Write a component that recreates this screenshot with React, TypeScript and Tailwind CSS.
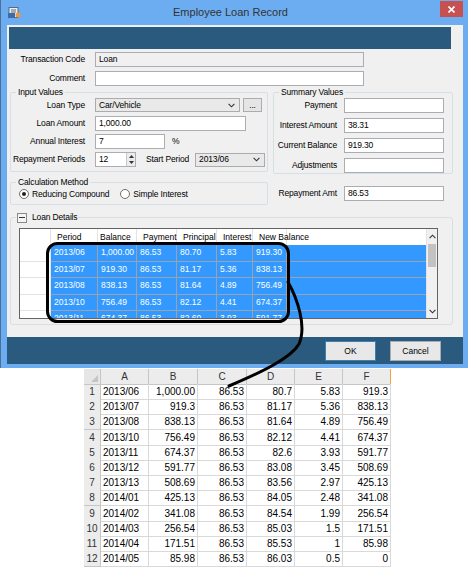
import React from "react";

// ---------- data ----------
const gridRows = [
	["2013/06", "1,000.00", "86.53", "80.70", "5.83", "919.30"],
	["2013/07", "919.30", "86.53", "81.17", "5.36", "838.13"],
	["2013/08", "838.13", "86.53", "81.64", "4.89", "756.49"],
	["2013/10", "756.49", "86.53", "82.12", "4.41", "674.37"],
	["2013/11", "674.37", "86.53", "82.60", "3.93", "591.77"],
];
const gridCols = ["Period", "Balance", "Payment", "Principal", "Interest", "New Balance"];
const gridWidths = ["w-[47px]", "w-[39px]", "w-[40px]", "w-[40px]", "w-[36px]", "w-[34px]"];

const sheetRows = [
	["2013/06", "1,000.00", "86.53", "80.7", "5.83", "919.3"],
	["2013/07", "919.3", "86.53", "81.17", "5.36", "838.13"],
	["2013/08", "838.13", "86.53", "81.64", "4.89", "756.49"],
	["2013/10", "756.49", "86.53", "82.12", "4.41", "674.37"],
	["2013/11", "674.37", "86.53", "82.6", "3.93", "591.77"],
	["2013/12", "591.77", "86.53", "83.08", "3.45", "508.69"],
	["2013/13", "508.69", "86.53", "83.56", "2.97", "425.13"],
	["2014/01", "425.13", "86.53", "84.05", "2.48", "341.08"],
	["2014/02", "341.08", "86.53", "84.54", "1.99", "256.54"],
	["2014/03", "256.54", "86.53", "85.03", "1.5", "171.51"],
	["2014/04", "171.51", "86.53", "85.53", "1", "85.98"],
	["2014/05", "85.98", "86.53", "86.03", "0.5", "0"],
];

// ---------- small controls ----------
const Chevron = () => (
	<svg width="7" height="5" viewBox="0 0 7 5" aria-hidden="true">
		<path d="M0.6 0.8 L3.5 3.8 L6.4 0.8" fill="none" stroke="#333" strokeWidth="1.1" />
	</svg>
);

const TextBox = ({ className = "", value = "", gray = false }: { className?: string; value?: string; gray?: boolean }) => (
	<div
		className={`h-[15px] border border-[#abadb3] flex items-center pl-[3px] whitespace-nowrap ${gray ? "bg-[#f0f0f0]" : "bg-white"} ${className}`}
	>
		{value}
	</div>
);

const Combo = ({ className = "", value }: { className?: string; value: string }) => (
	<div className={`h-[14px] border border-[#acacac] bg-[#e9e9e9] flex items-center pl-[3px] pr-[4px] ${className}`}>
		<span className="flex-1 whitespace-nowrap">{value}</span>
		<Chevron />
	</div>
);

const Radio = ({ checked, label }: { checked?: boolean; label: string }) => (
	<div className="flex items-center gap-[3px]">
		<div className="w-[10px] h-[10px] rounded-full border border-[#6f6f6f] bg-white flex items-center justify-center">
			{checked && <div className="w-[4px] h-[4px] rounded-full bg-[#222]" />}
		</div>
		<span className="whitespace-nowrap">{label}</span>
	</div>
);

const Legend = ({ children }: { children: React.ReactNode }) => (
	<legend className="ml-[5px] px-[2px] leading-[11px] whitespace-nowrap">{children}</legend>
);

// ---------- window ----------
const LoanDialog = () => (
	<div className="w-[468px] h-[368px] bg-[#6cadf1] border-l border-[#4d6f96]">
		{/* title bar */}
		<div className="h-[25px] flex items-start">
			<div className="ml-[7px] mt-[7px] w-[13px] h-[12px]">
				<svg width="13" height="12" viewBox="0 0 13 12" aria-hidden="true">
					<rect x="1" y="0.5" width="9" height="10" fill="#e9eef4" stroke="#5b6b7d" />
					<rect x="3" y="2.5" width="5" height="1" fill="#5b6b7d" />
					<rect x="3" y="4.5" width="5" height="1" fill="#5b6b7d" />
					<rect x="0" y="6" width="7" height="5" fill="#3f6aa8" />
					<circle cx="10" cy="8" r="2.5" fill="#e89a3c" />
				</svg>
			</div>
			<div className="flex-1 text-center text-[11px] leading-[25px] text-[#333]">Employee Loan Record</div>
			<div className="mt-[1px] mr-[5px] w-[23px] h-[16px] bg-[#c75050] flex items-center justify-center">
				<svg width="7" height="7" viewBox="0 0 7 7" aria-hidden="true">
					<path d="M0.5 0.5 L6.5 6.5 M6.5 0.5 L0.5 6.5" stroke="#fff" strokeWidth="1.6" />
				</svg>
			</div>
		</div>

		{/* client area */}
		<div className="ml-[6px] w-[456px] bg-[#f0f0f0] text-[8.5px] leading-[11px] tracking-[-0.15px] text-black">
			<div className="h-[312px] pt-[2px]">
				<div className="ml-[2px] w-[442px] h-[22px] bg-[#2a5a7e]" />

				<div className="mt-[3px] flex items-center">
					<div className="w-[78px] text-right whitespace-nowrap">Transaction Code</div>
					<TextBox className="ml-[10px] w-[269px]" value="Loan" gray />
				</div>
				<div className="mt-[4px] flex items-center">
					<div className="w-[78px] text-right">Comment</div>
					<TextBox className="ml-[10px] w-[269px]" />
				</div>

				<div className="mt-[1px] flex">
					{/* left column */}
					<div className="ml-[3px] w-[258px]">
						<fieldset className="h-[85px] border border-[#d5dfe5] rounded-[2px]">
							<Legend>Input Values</Legend>
							<div className="flex items-center">
								<div className="w-[74px] text-right">Loan Type</div>
								<Combo className="ml-[10px] w-[145px]" value="Car/Vehicle" />
								<div className="ml-[3px] w-[19px] h-[14px] border border-[#acacac] bg-[#e5e5e5] flex items-center justify-center">...</div>
							</div>
							<div className="mt-[4px] flex items-center">
								<div className="w-[74px] text-right">Loan Amount</div>
								<TextBox className="ml-[10px] w-[151px]" value="1,000.00" />
							</div>
							<div className="mt-[3px] flex items-center">
								<div className="w-[74px] text-right">Annual Interest</div>
								<TextBox className="ml-[10px] w-[70px]" value="7" />
								<span className="ml-[7px]">%</span>
							</div>
							<div className="mt-[3px] flex items-center">
								<div className="w-[74px] text-right whitespace-nowrap">Repayment Periods</div>
								<div className="ml-[10px] w-[41px] h-[15px] border border-[#abadb3] bg-white flex">
									<span className="flex-1 pl-[3px] leading-[13px]">12</span>
									<div className="w-[9px] border-l border-[#c8c8c8] bg-[#ececec] flex flex-col items-center justify-around">
										<svg width="5" height="3" viewBox="0 0 5 3" aria-hidden="true"><path d="M0 3 L2.5 0 L5 3Z" fill="#333" /></svg>
										<svg width="5" height="3" viewBox="0 0 5 3" aria-hidden="true"><path d="M0 0 L2.5 3 L5 0Z" fill="#333" /></svg>
									</div>
								</div>
								<span className="ml-[10px] whitespace-nowrap">Start Period</span>
								<Combo className="ml-[6px] w-[70px]" value="2013/06" />
							</div>
						</fieldset>

						<fieldset className="mt-[5px] h-[28px] border border-[#d5dfe5] rounded-[2px]">
							<Legend>Calculation Method</Legend>
							<div className="flex items-center h-[12px] ml-[8px]">
								<Radio checked label="Reducing Compound" />
								<div className="ml-[11px]">
									<Radio label="Simple Interest" />
								</div>
							</div>
						</fieldset>
					</div>

					{/* right column */}
					<div className="ml-[5px] w-[180px]">
						<fieldset className="h-[87px] border border-[#d5dfe5] rounded-[2px]">
							<Legend>Summary Values</Legend>
							<div className="flex items-center">
								<div className="w-[63px] text-right">Payment</div>
								<TextBox className="ml-[7px] w-[100px] h-[14px]" />
							</div>
							<div className="mt-[5px] flex items-center">
								<div className="w-[63px] text-right whitespace-nowrap">Interest Amount</div>
								<TextBox className="ml-[7px] w-[100px] h-[14px]" value="38.31" />
							</div>
							<div className="mt-[5px] flex items-center">
								<div className="w-[63px] text-right whitespace-nowrap">Current Balance</div>
								<TextBox className="ml-[7px] w-[100px] h-[14px]" value="919.30" />
							</div>
							<div className="mt-[5px] flex items-center">
								<div className="w-[63px] text-right">Adjustments</div>
								<TextBox className="ml-[7px] w-[100px]" />
							</div>
						</fieldset>
						<div className="mt-[12px] flex items-center">
							<div className="w-[64px] text-right whitespace-nowrap">Repayment Amt</div>
							<TextBox className="ml-[7px] w-[100px]" value="86.53" />
						</div>
					</div>
				</div>

				{/* loan details */}
				<fieldset className="mt-[7px] ml-[3px] w-[443px] border border-[#d5dfe5] rounded-[3px] pb-[5px]">
					<legend className="ml-[5px] px-[1px] leading-[11px] flex items-center gap-[5px]">
						<span className="w-[10px] h-[10px] border border-[#8a8a8a] bg-[#f4f4f4] flex items-center justify-center">
							<span className="w-[6px] h-px bg-[#333]" />
						</span>
						<span>Loan Details</span>
					</legend>
					<div className="mt-[5px] ml-[8px] w-[419px] h-[91px] border border-[#646464] bg-white flex overflow-hidden tracking-normal">
						<div className="flex-1">
							<div className="flex h-[16px] items-center">
								<div className="w-[31px] h-full border-r border-[#e3e3e3]" />
								{gridCols.map((c, i) => (
									<div key={c} className={`${gridWidths[i]} h-full border-r border-[#e3e3e3] flex items-center whitespace-nowrap ${i === 1 ? "pl-[2px]" : "pl-[6px]"}`}>
										{c}
									</div>
								))}
							</div>
							{gridRows.map((r, ri) => (
								<div key={ri} className="flex h-[16.5px]">
									<div className="w-[31px] border-b border-r border-[#e3e3e3]" />
									<div className="flex-1 flex bg-[#3399ff] text-white border-b border-[#9aa3ad]">
										{r.map((v, i) => (
											<div key={i} className={`${gridWidths[i]} border-r border-[#9aa3ad] pl-[3px] flex items-center whitespace-nowrap`}>
												{v}
											</div>
										))}
									</div>
								</div>
							))}
						</div>
						<div className="w-[11px] bg-[#f0f0f0] border-l border-[#e3e3e3] flex flex-col items-center">
							<div className="h-[15px] flex items-center">
								<svg width="7" height="5" viewBox="0 0 7 5" aria-hidden="true"><path d="M0.6 4.2 L3.5 1.2 L6.4 4.2" fill="none" stroke="#333" strokeWidth="1.1" /></svg>
							</div>
							<div className="w-[8px] h-[23px] bg-[#c2c2c2]" />
							<div className="flex-1" />
							<div className="h-[14px] flex items-center">
								<Chevron />
							</div>
						</div>
					</div>
				</fieldset>
			</div>

			{/* footer */}
			<div className="h-[27px] bg-[#2a5a7e] flex justify-end items-start pt-[4px] pr-[22px] gap-[14px] tracking-normal">
				<div className="w-[51px] h-[20px] border border-[#3c7fb1] bg-[#e8e8e8] flex items-center justify-center">OK</div>
				<div className="w-[51px] h-[20px] border border-[#acacac] bg-[#e8e8e8] flex items-center justify-center">Cancel</div>
			</div>
		</div>
	</div>
);

// ---------- spreadsheet ----------
const Sheet = () => (
	<div className="mt-[1px] ml-[84px] w-[307px] text-[10px] text-black">
		<div className="grid grid-cols-[17px_48px_49px_49px_48px_48px_48px] h-[15px]">
			<div className="bg-[#e6e6e6] border-r border-b border-[#c6c6c6] relative">
				<svg className="absolute right-[2px] bottom-[2px]" width="7" height="7" viewBox="0 0 7 7" aria-hidden="true">
					<path d="M7 0 L7 7 L0 7Z" fill="#c4c4c4" />
				</svg>
			</div>
			{["A", "B", "C", "D", "E", "F"].map((c) => (
				<div
					key={c}
					className={`bg-[#ececec] border-r border-b border-[#c6c6c6] flex items-center justify-center text-[#333] ${c === "F" ? "border-r-[#f2a33a]" : ""}`}
				>
					{c}
				</div>
			))}
		</div>
		{sheetRows.map((r, ri) => (
			<div key={ri} className="grid grid-cols-[17px_48px_49px_49px_48px_48px_48px] h-[15.2px]">
				<div className="bg-[#ececec] border-r border-b border-[#c6c6c6] flex items-center justify-center text-[#333]">{ri + 1}</div>
				{r.map((v, i) => (
					<div
						key={i}
						className={`border-r border-b border-[#d9d9d9] flex items-center whitespace-nowrap ${i === 0 ? "pl-[2px]" : "justify-end pr-[2px]"}`}
					>
						{v}
					</div>
				))}
			</div>
		))}
	</div>
);

export default function App() {
	return (
		<div className="w-[468px] h-[567px] bg-white relative overflow-hidden font-['Liberation_Sans',Arial,sans-serif]">
			<LoanDialog />
			<Sheet />

			{/* hand-drawn highlight + connector */}
			<svg className="absolute left-0 top-0 pointer-events-none" width="468" height="567" viewBox="0 0 468 567" aria-hidden="true">
				<rect x="47.5" y="243.5" width="241" height="78" rx="10" fill="none" stroke="#000" strokeWidth="3" />
				<path
					d="M288 282 C297 298 307 326 299 344 C291 358 262 372 229 386"
					fill="none"
					stroke="#000"
					strokeWidth="3"
					strokeLinecap="round"
				/>
			</svg>
		</div>
	);
}
